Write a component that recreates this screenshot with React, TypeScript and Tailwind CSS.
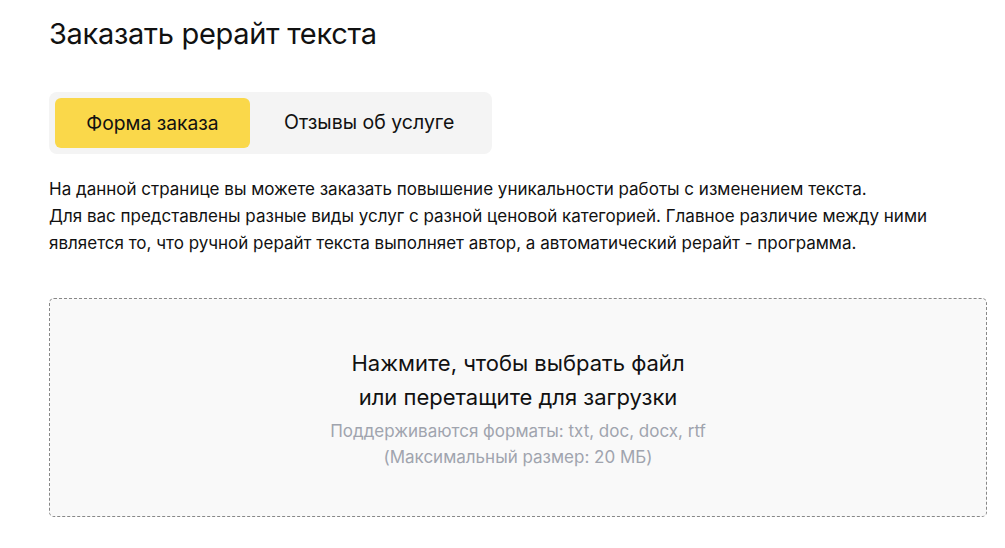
export default function App() {
  return (
    <div className="min-h-screen bg-white font-['Inter',sans-serif] text-[#111]">
      <div className="pl-[49px] pr-[18px] pt-[16px]">
        <h1 className="text-[29px] leading-[35px] font-normal tracking-[-0.3px]">Заказать рерайт текста</h1>

        <div className="mt-[41px] inline-flex items-center rounded-[8px] bg-[#f4f4f4] p-[6px]">
          <button className="h-[50px] w-[195px] rounded-[6px] bg-[#fad84a] text-[19.3px]">Форма заказа</button>
          <button className="h-[50px] pl-[34px] pr-[32px] text-[19.5px]">Отзывы об услуге</button>
        </div>

        <div className="mt-[22px] text-[17px] leading-[27px]">
          <p>На данной странице вы можете заказать повышение уникальности работы с изменением текста.</p>
          <p>
            Для вас представлены разные виды услуг с разной ценовой категорией. Главное различие между ними
            <br />
            является то, что ручной рерайт текста выполняет автор, а автоматический рерайт - программа.
          </p>
        </div>

        <div className="mt-[41px] flex h-[219px] flex-col items-center justify-center rounded-[5px] border border-dashed border-[#888] bg-[#f9f9f9] text-center">
          <p className="text-[22px] leading-[34px]">
            Нажмите, чтобы выбрать файл
            <br />
            или перетащите для загрузки
          </p>
          <p className="mt-[4px] text-[17px] leading-[26px] text-[#a0a4ae]">
            Поддерживаются форматы: txt, doc, docx, rtf
            <br />
            (Максимальный размер: 20 МБ)
          </p>
        </div>
      </div>
    </div>
  )
}
